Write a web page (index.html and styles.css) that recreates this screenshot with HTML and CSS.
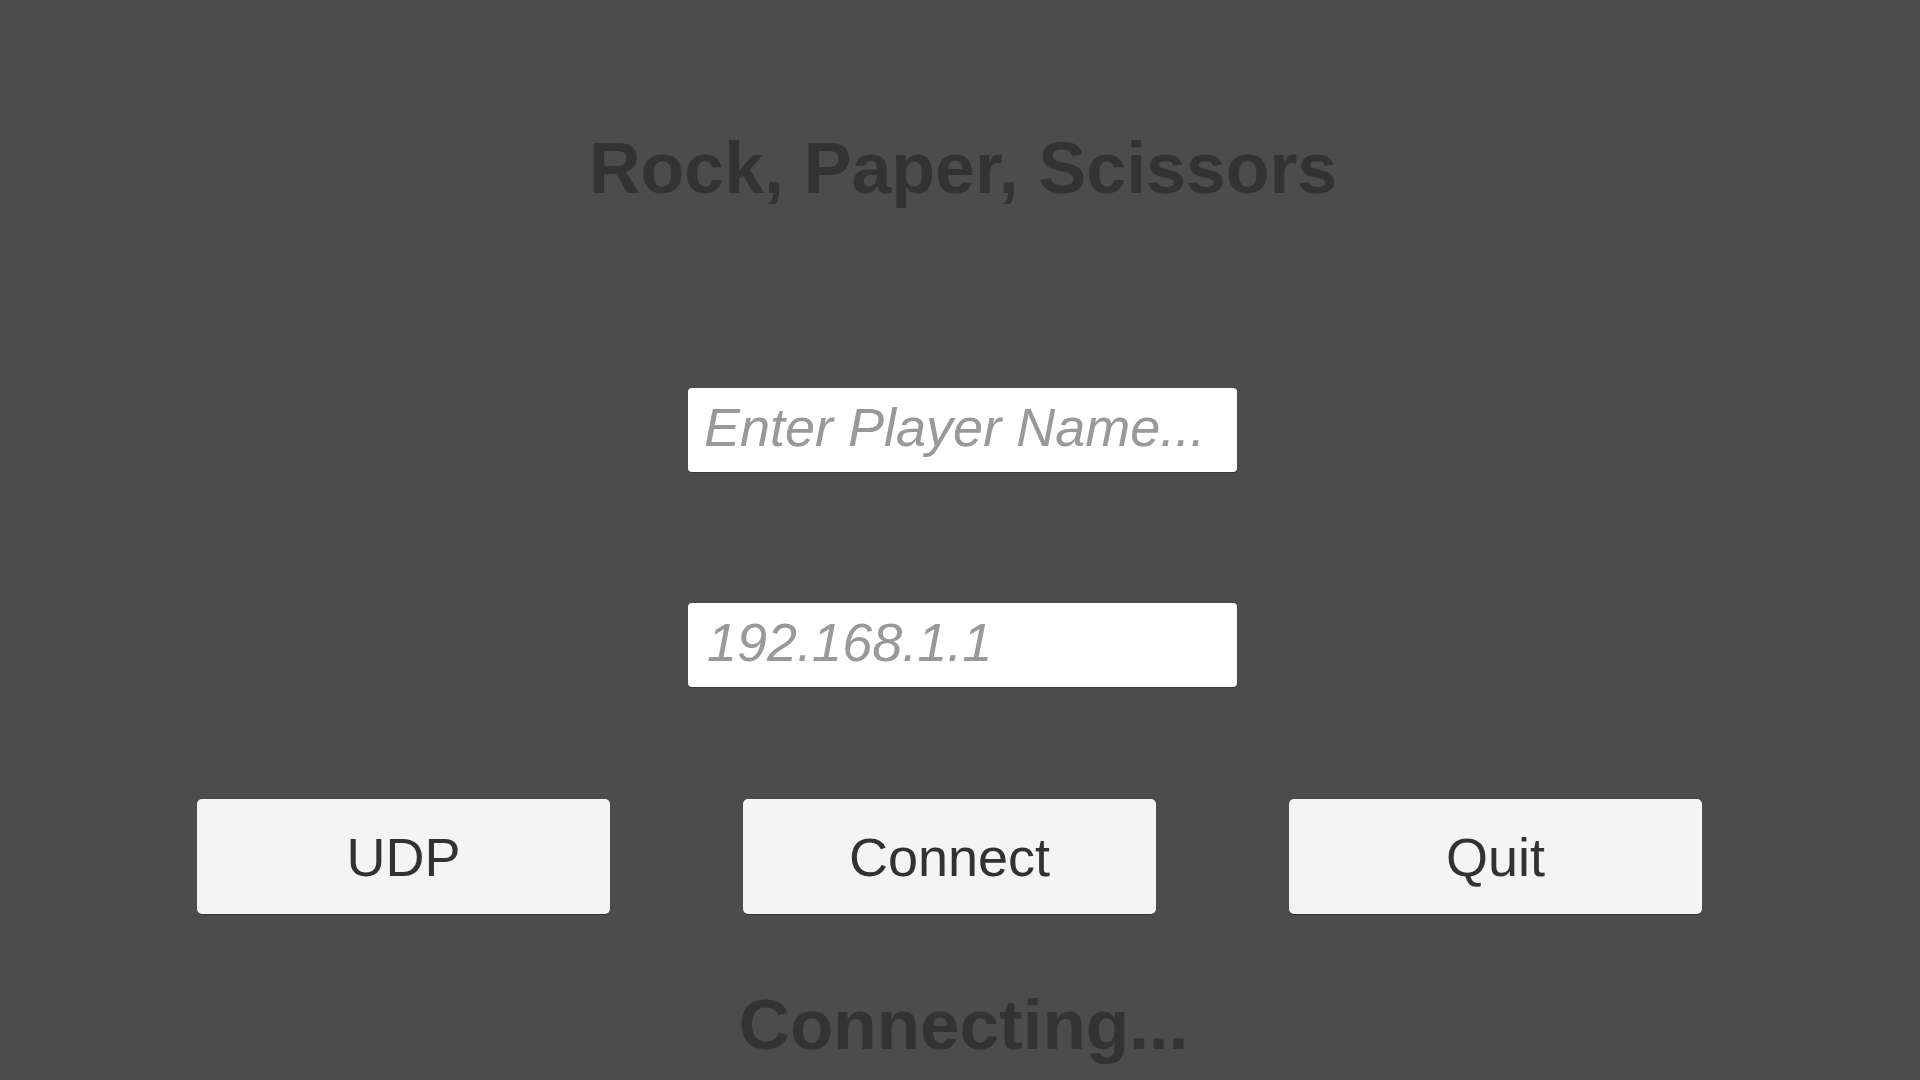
FILE: index.html
```html
<!DOCTYPE html>
<html lang="en">
<head>
<meta charset="utf-8">
<title>Rock, Paper, Scissors</title>
<link rel="stylesheet" href="styles.css">
</head>
<body>
<main class="menu">
  <h1 class="title">Rock, Paper, Scissors</h1>
  <div class="field field-name"><span class="placeholder">Enter Player Name...</span></div>
  <div class="field field-ip"><span class="placeholder">192.168.1.1</span></div>
  <div class="buttons">
    <button class="btn">UDP</button>
    <button class="btn">Connect</button>
    <button class="btn">Quit</button>
  </div>
  <p class="status">Connecting...</p>
</main>
</body>
</html>
```

FILE: styles.css
```css
html, body {
  margin: 0;
  padding: 0;
  height: 100%;
}
body {
  background: #4c4c4c;
  font-family: "Liberation Sans", Arial, sans-serif;
  overflow: hidden;
}
.menu {
  display: flex;
  flex-direction: column;
  width: 1920px;
  height: 1080px;
}
.title {
  margin: 133px 0 0 0;
  height: 71px;
  font-size: 71.6px;
  line-height: 71px;
  font-weight: bold;
  color: #333333;
  text-align: center;
  padding-left: 6px;
}
.field {
  box-sizing: border-box;
  width: 549px;
  height: 84px;
  margin-left: 688px;
  background: #ffffff;
  border-radius: 4px;
  box-shadow: 0 1px 0 rgba(0,0,0,0.25);
  padding: 0 0 6px 16px;
  font-size: 54px;
  line-height: 78px;
  font-style: italic;
  color: #999999;
  white-space: nowrap;
}
.field-name {
  margin-top: 184px;
}
.field-ip {
  margin-top: 131px;
}
.field-ip .placeholder {
  padding-left: 3px;
}
.buttons {
  display: flex;
  gap: 133px;
  margin-top: 112px;
  padding-left: 197px;
}
.btn {
  width: 413px;
  height: 115px;
  border: none;
  border-radius: 5px;
  background: #f4f4f4;
  box-shadow: 0 1px 0 rgba(0,0,0,0.3);
  color: #323232;
  font-family: "Liberation Sans", Arial, sans-serif;
  font-size: 54px;
  padding: 0;
  display: flex;
  align-items: center;
  justify-content: center;
}
.status {
  margin: 75px 0 0 0;
  height: 71px;
  font-size: 71px;
  line-height: 71px;
  font-weight: bold;
  color: #333333;
  text-align: center;
  padding-left: 7px;
}
```
